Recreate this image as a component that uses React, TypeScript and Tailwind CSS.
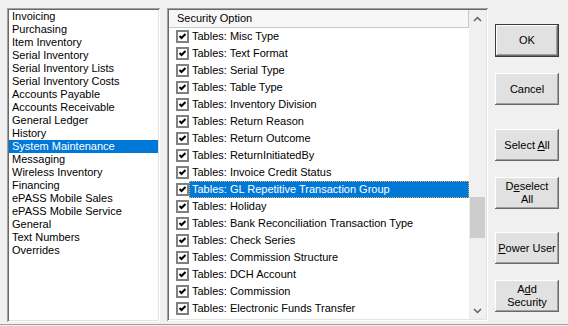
import React from "react";

const categories = [
  "Invoicing",
  "Purchasing",
  "Item Inventory",
  "Serial Inventory",
  "Serial Inventory Lists",
  "Serial Inventory Costs",
  "Accounts Payable",
  "Accounts Receivable",
  "General Ledger",
  "History",
  "System Maintenance",
  "Messaging",
  "Wireless Inventory",
  "Financing",
  "ePASS Mobile Sales",
  "ePASS Mobile Service",
  "General",
  "Text Numbers",
  "Overrides",
];

const options = [
  "Tables: Misc Type",
  "Tables: Text Format",
  "Tables: Serial Type",
  "Tables: Table Type",
  "Tables: Inventory Division",
  "Tables: Return Reason",
  "Tables: Return Outcome",
  "Tables: ReturnInitiatedBy",
  "Tables: Invoice Credit Status",
  "Tables: GL Repetitive Transaction Group",
  "Tables: Holiday",
  "Tables: Bank Reconciliation Transaction Type",
  "Tables: Check Series",
  "Tables: Commission Structure",
  "Tables: DCH Account",
  "Tables: Commission",
  "Tables: Electronic Funds Transfer",
];

const sunken =
  "shadow-[inset_1px_1px_#a0a0a0,inset_-1px_-1px_#ffffff,inset_2px_2px_#696969,inset_-2px_-2px_#e3e3e3] p-[2px]";

function CheckBox() {
  return (
    <div className="w-[13px] h-[13px] border-2 border-[#808080] bg-white flex items-center justify-center shrink-0">
      <svg width="9" height="9" viewBox="0 0 9 9">
        <path d="M1.5 4 L3.5 6 L7.5 2" fill="none" stroke="#000" strokeWidth="2" />
      </svg>
    </div>
  );
}

function Btn({ children, def, className }: any) {
  return (
    <button
      className={`w-[64px] bg-[#e1e1e1] text-black leading-[13px] flex flex-col items-center justify-center ${
        def
          ? "h-[33px] border border-[#3c3c3c] shadow-[inset_-1px_-1px_#696969,inset_1px_1px_#ffffff,inset_-2px_-2px_#a0a0a0,inset_2px_2px_#e3e3e3]"
          : "h-[32px] shadow-[inset_-1px_-1px_#696969,inset_1px_1px_#ffffff,inset_-2px_-2px_#a0a0a0,inset_2px_2px_#e3e3e3]"
      } ${className || ""}`}
    >
      {children}
    </button>
  );
}

export default function App() {
  return (
    <div
      className="w-[568px] h-[326px] bg-[#f0f0f0] flex flex-col text-[11px] text-black overflow-hidden"
      style={{ fontFamily: '"Liberation Sans", Arial, sans-serif' }}
    >
      <div className="flex-1 flex pl-[7px] pt-[8px]">
        {/* Category list */}
        <div className={`w-[153px] h-[314px] bg-white ${sunken}`}>
          <div className="bg-white h-full">
            {categories.map((c) => (
              <div
                key={c}
                className={`h-[13px] leading-[13px] pl-[3px] whitespace-nowrap ${
                  c === "System Maintenance" ? "bg-[#0078d7] text-white" : ""
                }`}
              >
                {c}
              </div>
            ))}
          </div>
        </div>

        {/* Security options */}
        <div className={`ml-[7px] w-[321px] h-[313px] bg-white ${sunken}`}>
          <div className="flex h-full">
            <div className="flex-1 flex flex-col">
              <div className="h-[18px] bg-[#f7f7f7] border-b border-r border-[#c8c8c8] pl-[8px] leading-[17px]">
                Security Option
              </div>
              {options.map((o) => {
                const sel = o === "Tables: GL Repetitive Transaction Group";
                return (
                  <div key={o} className="h-[17px] flex items-center pl-[7px]">
                    <CheckBox />
                    <div
                      className={`flex-1 h-[17px] leading-[15px] pl-[2px] whitespace-nowrap ${
                        sel
                          ? "bg-[#0078d7] text-white border border-dotted border-[#e8b050]"
                          : "border border-transparent"
                      }`}
                    >
                      {o}
                    </div>
                  </div>
                );
              })}
            </div>
            {/* Scrollbar */}
            <div className="w-[17px] bg-[#f0f0f0] flex flex-col">
              <div className="h-[17px] flex items-center justify-center">
                <svg width="9" height="6" viewBox="0 0 9 6">
                  <path d="M1 5 L4.5 1.5 L8 5" fill="none" stroke="#606060" strokeWidth="1.5" />
                </svg>
              </div>
              <div className="h-[170px]" />
              <div className="h-[41px] mx-[1px] bg-[#cdcdcd]" />
              <div className="flex-1" />
              <div className="h-[17px] flex items-center justify-center">
                <svg width="9" height="6" viewBox="0 0 9 6">
                  <path d="M1 1 L4.5 4.5 L8 1" fill="none" stroke="#606060" strokeWidth="1.5" />
                </svg>
              </div>
            </div>
          </div>
        </div>

        {/* Buttons */}
        <div className="ml-[7px] flex flex-col">
          <Btn def className="mt-[16px]">
            OK
          </Btn>
          <Btn className="mt-[16px]">Cancel</Btn>
          <Btn className="mt-[24px]">
            <span>
              Select <u>A</u>ll
            </span>
          </Btn>
          <Btn className="mt-[16px]">
            <span>
              D<u>e</u>select
            </span>
            <span>All</span>
          </Btn>
          <Btn className="mt-[23px]">
            <span>
              <u>P</u>ower User
            </span>
          </Btn>
          <Btn className="mt-[16px]">
            <span>
              A<u>d</u>d
            </span>
            <span>Security</span>
          </Btn>
        </div>
      </div>
      <div className="h-px bg-[#a0a0a0] mb-[1px]" />
    </div>
  );
}
